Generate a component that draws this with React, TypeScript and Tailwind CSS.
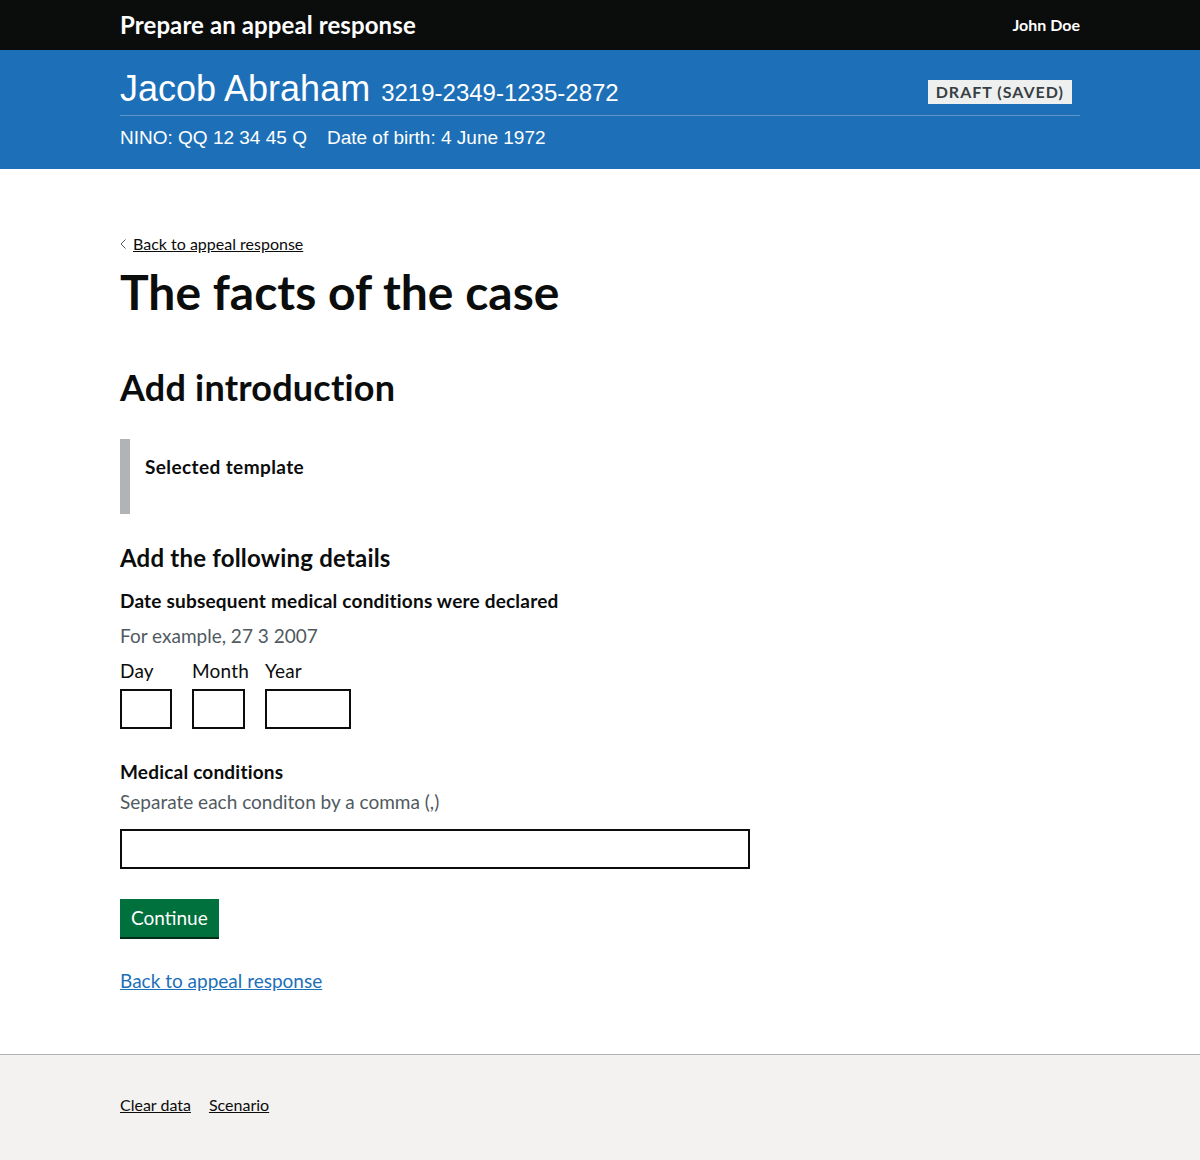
import React from 'react';

const gds = { fontFamily: 'Lato, "Noto Sans", Arial, sans-serif' };
const arial = { fontFamily: '"Liberation Sans", Arial, sans-serif' };

function DateField({ label, width }: { label: string; width: string }) {
  return (
    <div className={`${width} flex flex-col mr-5`}>
      <label className="text-[19px] leading-[25px] mb-[6px] whitespace-nowrap text-[#0b0c0c]">{label}</label>
      <input className={`${width} h-10 border-2 border-[#0b0c0c] bg-white outline-none`} />
    </div>
  );
}

export default function App() {
  return (
    <div className="min-h-[1160px] flex flex-col bg-white text-[#0b0c0c]" style={gds}>
      <header className="bg-[#0b0c0c] h-[50px]">
        <div className="mx-[120px] h-full flex items-center justify-between">
          <span className="text-white font-bold text-[24px] tracking-[0.1px]">Prepare an appeal response</span>
          <span className="text-white font-bold text-[16px]">John Doe</span>
        </div>
      </header>

      <section className="bg-[#1d70b8] h-[119px]" style={arial}>
        <div className="mx-[120px] pt-[19px]">
          <div className="flex items-end justify-between border-b border-[#5f95cc] pb-[4px]">
            <div className="flex items-baseline gap-[11px] text-white">
              <span className="text-[36px] leading-[40px]">Jacob Abraham</span>
              <span className="text-[24px]">3219-2349-1235-2872</span>
            </div>
            <span
              className="mr-2 mb-[7px] bg-[#eef0f0] text-[#383f43] font-bold text-[16px] tracking-[1px] px-[8px] py-[2px] leading-[20px]"
              style={gds}
            >
              DRAFT (SAVED)
            </span>
          </div>
          <div className="flex gap-5 text-white text-[19px] pt-[8px]">
            <span>NINO: QQ 12 34 45 Q</span>
            <span>Date of birth: 4 June 1972</span>
          </div>
        </div>
      </section>

      <main className="flex-1 mx-[120px] pt-[65px] pb-[55px] tracking-[0.2px]">
        <a href="#" className="flex items-center gap-[7px] text-[16px] leading-[20px] underline text-[#0b0c0c] w-fit tracking-normal">
          <svg width="6" height="10" viewBox="0 0 6 10" fill="none" stroke="#505a5f" strokeWidth="1">
            <path d="M5.5 0.5 L1 5 L5.5 9.5" />
          </svg>
          Back to appeal response
        </a>
        <h1 className="text-[48px] font-bold leading-[52px] mt-[12px] tracking-[0px]">The facts of the case</h1>
        <h2 className="text-[36px] font-bold leading-[40px] mt-[49px]">Add introduction</h2>

        <div className="mt-[32px] border-l-[10px] border-[#b1b4b6] pl-[15px] pt-[15px] h-[75px]">
          <p className="font-bold text-[19px] leading-[25px] tracking-[0.4px]">Selected template</p>
        </div>

        <h3 className="text-[24px] font-bold leading-[30px] mt-[29px]">Add the following details</h3>
        <p className="text-[19px] font-bold leading-[25px] mt-[15px]">Date subsequent medical conditions were declared</p>
        <p className="text-[19px] leading-[25px] mt-[10px] text-[#505a5f] tracking-normal">For example, 27 3 2007</p>
        <div className="flex mt-[10px]">
          <DateField label="Day" width="w-[52px]" />
          <DateField label="Month" width="w-[53px]" />
          <DateField label="Year" width="w-[86px]" />
        </div>

        <p className="text-[19px] font-bold leading-[25px] mt-[30px]">Medical conditions</p>
        <p className="text-[19px] leading-[25px] mt-[5px] text-[#505a5f] tracking-normal">Separate each conditon by a comma (,)</p>
        <input className="mt-[15px] w-[630px] h-10 border-2 border-[#0b0c0c] outline-none block" />

        <button className="mt-[30px] bg-[#00703c] text-white text-[19px] h-[38px] px-[11px] shadow-[0_2px_0_#002d18] block tracking-normal">
          Continue
        </button>

        <a href="#" className="block w-fit mt-[30px] text-[19px] text-[#1d70b8] underline tracking-normal">Back to appeal response</a>
      </main>

      <footer className="bg-[#f3f2f1] border-t border-[#b1b4b6] h-[106px]">
        <div className="mx-[120px] pt-[38px] flex gap-[18px] text-[16px]">
          <a href="#" className="underline text-[#0b0c0c]">Clear data</a>
          <a href="#" className="underline text-[#0b0c0c]">Scenario</a>
        </div>
      </footer>
    </div>
  );
}
